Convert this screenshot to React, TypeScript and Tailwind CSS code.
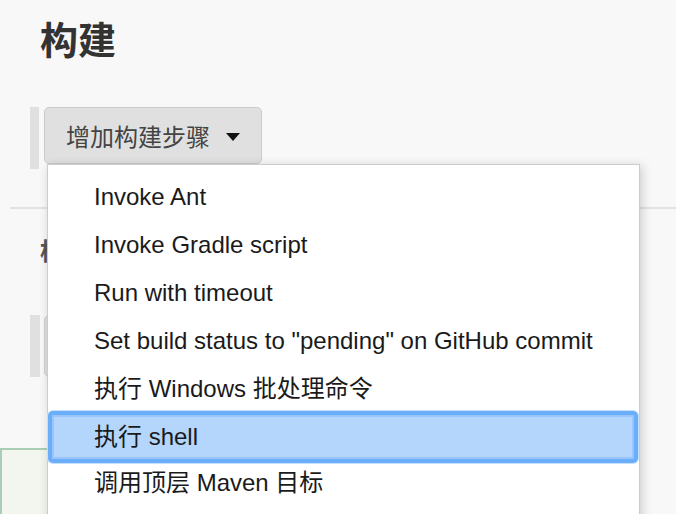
const items = [
  "Invoke Ant",
  "Invoke Gradle script",
  "Run with timeout",
  'Set build status to "pending" on GitHub commit',
  "执行 Windows 批处理命令",
  "执行 shell",
  "调用顶层 Maven 目标",
];

const cjk = "font-['Noto_Sans_CJK_SC',sans-serif]";
const menuFont = "font-['Liberation_Sans','Noto_Sans_CJK_SC',sans-serif]";

export default function App() {
  return (
    <div className="relative w-[676px] h-[514px] overflow-hidden bg-[#f8f8f8] text-[#333]">
      <h1 className={`${cjk} pl-[40px] pt-[18px] text-[38px] leading-[40px] font-bold text-[#333]`}>
        构建
      </h1>

      {/* add build step row */}
      <div className="mt-[49px] flex h-[62px] pl-[30px]">
        <div className="w-[9px] bg-[#e0e0e0]" />
        <button
          className={`${cjk} ml-[5px] flex h-[57px] w-[218px] items-center rounded-[5px] border border-[#cbcbcb] bg-[#e0e0e0] pl-[21px] text-[24px] text-[#444]`}
        >
          增加构建步骤
          <span className="ml-[16px] mt-[2px] h-0 w-0 border-x-[7px] border-t-[8px] border-x-transparent border-t-[#111]" />
        </button>
      </div>

      <div className="ml-[10px] mt-[38px] h-[2px] bg-[#e2e2e2]" />

      {/* post-build heading, mostly covered by the menu */}
      <div className="ml-[40px] mt-[26px] w-[7px] overflow-hidden">
        <h2 className={`${cjk} w-[140px] text-[24px] leading-[30px] font-bold text-[#555]`}>
          构建后操作
        </h2>
      </div>

      <div className="mt-[50px] flex h-[62px] pl-[30px]">
        <div className="w-[10px] bg-[#e0e0e0]" />
        <div className="ml-[4px] w-[120px] rounded-[5px] border border-[#d0d0d0] bg-[#e0e0e0]" />
      </div>

      <div className="mt-[71px] h-[80px] w-[200px] border-l-2 border-t-2 border-[#a9cdb7] bg-[#f3f6ee]" />

      {/* dropdown menu */}
      <div className="absolute left-[47px] top-[164px] h-[400px] w-[593px] border border-[#cccccc] bg-white shadow-[2px_2px_10px_rgba(0,0,0,0.18)]">
        <ul className={`${menuFont} pt-[8px] text-[24px] text-[#1a1a1a]`}>
          {items.map((t, i) =>
            t === "执行 shell" ? (
              <li key={i} className="h-[48px]">
                <div className="mt-[-2px] mr-[1px] h-[52px] rounded-[5px] border-[4px] border-[#6aaefa] bg-[#b4d6fc] pl-[42px] leading-[44px] shadow-[0_0_0_1px_#c7e0fd,inset_0_0_0_2px_#98c6fc]">
                  {t}
                </div>
              </li>
            ) : (
              <li key={i} className="h-[48px] pl-[46px] leading-[48px]">
                {t}
              </li>
            )
          )}
        </ul>
      </div>
    </div>
  );
}
